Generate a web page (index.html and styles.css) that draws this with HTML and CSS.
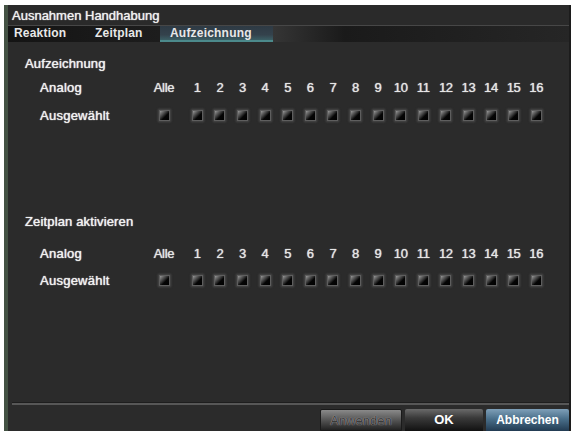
FILE: index.html
```html
<!DOCTYPE html>
<html lang="de">
<head>
<meta charset="utf-8">
<title>Ausnahmen Handhabung</title>
<link rel="stylesheet" href="styles.css">
</head>
<body>
<div class="dialog">
  <div class="titlebar">Ausnahmen Handhabung</div>
  <div class="tabs">
    <span class="tab tab-reaktion">Reaktion</span>
    <span class="tab tab-zeitplan">Zeitplan</span>
    <span class="tab tab-active">Aufzeichnung</span>
  </div>
  <div class="content">
    <div class="section section-first">
      <div class="heading">Aufzeichnung</div>
      <div class="grid grid-first">
        <div class="label">Analog</div>
        <div class="cell alle">Alle</div>
        <div class="cell">1</div><div class="cell">2</div><div class="cell">3</div><div class="cell">4</div>
        <div class="cell">5</div><div class="cell">6</div><div class="cell">7</div><div class="cell">8</div>
        <div class="cell">9</div><div class="cell">10</div><div class="cell">11</div><div class="cell">12</div>
        <div class="cell">13</div><div class="cell">14</div><div class="cell">15</div><div class="cell">16</div>
        <div class="label">Ausgewählt</div>
        <div class="cell alle"><span class="cb"></span></div>
        <div class="cell"><span class="cb"></span></div><div class="cell"><span class="cb"></span></div>
        <div class="cell"><span class="cb"></span></div><div class="cell"><span class="cb"></span></div>
        <div class="cell"><span class="cb"></span></div><div class="cell"><span class="cb"></span></div>
        <div class="cell"><span class="cb"></span></div><div class="cell"><span class="cb"></span></div>
        <div class="cell"><span class="cb"></span></div><div class="cell"><span class="cb"></span></div>
        <div class="cell"><span class="cb"></span></div><div class="cell"><span class="cb"></span></div>
        <div class="cell"><span class="cb"></span></div><div class="cell"><span class="cb"></span></div>
        <div class="cell"><span class="cb"></span></div><div class="cell"><span class="cb"></span></div>
      </div>
    </div>
    <div class="section section-second">
      <div class="heading">Zeitplan aktivieren</div>
      <div class="grid grid-second">
        <div class="label">Analog</div>
        <div class="cell alle">Alle</div>
        <div class="cell">1</div><div class="cell">2</div><div class="cell">3</div><div class="cell">4</div>
        <div class="cell">5</div><div class="cell">6</div><div class="cell">7</div><div class="cell">8</div>
        <div class="cell">9</div><div class="cell">10</div><div class="cell">11</div><div class="cell">12</div>
        <div class="cell">13</div><div class="cell">14</div><div class="cell">15</div><div class="cell">16</div>
        <div class="label">Ausgewählt</div>
        <div class="cell alle"><span class="cb"></span></div>
        <div class="cell"><span class="cb"></span></div><div class="cell"><span class="cb"></span></div>
        <div class="cell"><span class="cb"></span></div><div class="cell"><span class="cb"></span></div>
        <div class="cell"><span class="cb"></span></div><div class="cell"><span class="cb"></span></div>
        <div class="cell"><span class="cb"></span></div><div class="cell"><span class="cb"></span></div>
        <div class="cell"><span class="cb"></span></div><div class="cell"><span class="cb"></span></div>
        <div class="cell"><span class="cb"></span></div><div class="cell"><span class="cb"></span></div>
        <div class="cell"><span class="cb"></span></div><div class="cell"><span class="cb"></span></div>
        <div class="cell"><span class="cb"></span></div><div class="cell"><span class="cb"></span></div>
      </div>
    </div>
  </div>
  <div class="footer">
    <div class="buttons">
      <span class="btn btn-disabled">Anwenden</span>
      <span class="btn btn-ok">OK</span>
      <span class="btn btn-primary">Abbrechen</span>
    </div>
  </div>
</div>
</body>
</html>
```

FILE: styles.css
```css
html, body {
  margin: 0;
  padding: 0;
  background: #ffffff;
}

body {
  font-family: "Liberation Sans", Arial, sans-serif;
  font-size: 13px;
  color: #f2f2f2;
}

.dialog {
  margin: 5px 0 0 4px;
  width: 567px;
  height: 426px;
  background: #2b2b2b;
  border-left: 4px solid #445244;
  border-right: 2px solid #1c1c1c;
  box-sizing: border-box;
  display: flex;
  flex-direction: column;
  overflow: hidden;
}

.titlebar {
  height: 20px;
  line-height: 21px;
  padding-left: 4px;
  background: #2a2a2a;
  border-bottom: 1px solid #474747;
  text-shadow: 0 0 1px rgba(255, 255, 255, 0.7), 0 0 1px rgba(255, 255, 255, 0.4);
  flex: none;
}

.tabs {
  height: 16px;
  display: flex;
  align-items: stretch;
  padding-left: 2px;
  background: linear-gradient(to right, #141414 0%, #1e1e1e 30%, #3a3a3a 45%, #1a1a1a 60%, #262626 100%);
  flex: none;
}

.tab {
  line-height: 15px;
  font-weight: bold;
  font-size: 12px;
  color: #e8e8e8;
  letter-spacing: 0.2px;
}

.tab-reaktion {
  padding-left: 4px;
  width: 73px;
}

.tab-zeitplan {
  padding-left: 8px;
  width: 65px;
}

.tab-active {
  width: 103px;
  padding-left: 10px;
  background: linear-gradient(to bottom, #2e3a44 0%, #34424c 55%, #3d6a6e 100%);
  box-shadow: inset 0 -2px 0 #4c8a8c;
}

.content {
  flex: 1;
}

.section-first {
  padding-top: 14px;
}

.section-second {
  padding-top: 89px;
}

.heading {
  padding-left: 17px;
  line-height: 16px;
  letter-spacing: 0.15px;
  text-shadow: 0 0 1px rgba(255, 255, 255, 0.8), 0 0 1px rgba(255, 255, 255, 0.5);
}

.grid {
  display: grid;
  grid-template-columns: 109px 37px repeat(16, 22.6px);
  grid-auto-rows: 20px;
  padding-left: 32px;
  align-items: center;
}

.grid-first {
  margin-top: 5px;
  row-gap: 8px;
}

.grid-second {
  margin-top: 13px;
  row-gap: 7px;
}

.label {
  letter-spacing: 0.25px;
  text-shadow: 0 0 1px rgba(255, 255, 255, 0.8), 0 0 1px rgba(255, 255, 255, 0.5);
}

.cell {
  text-align: center;
  color: #e6e6e6;
  text-shadow: 0 0 1px rgba(255, 255, 255, 0.7), 0 0 1px rgba(255, 255, 255, 0.4);
  letter-spacing: -0.3px;
  display: flex;
  justify-content: center;
  align-items: center;
}

.alle {
  padding-right: 7px;
}

.cb {
  display: block;
  width: 9px;
  height: 9px;
  border: 1px solid #5e5e5e;
  background: linear-gradient(135deg, #9a9a9a 0%, #3a3a3a 40%, #050505 60%, #000 100%);
  box-shadow: 0 0 2px 1px #4a4a4a;
}

.footer {
  flex: none;
  margin-left: 4px;
  border-top: 2px solid #575757;
  box-shadow: 0 -1px 0 #1e1e1e;
  height: 28px;
  box-sizing: border-box;
}

.buttons {
  display: flex;
  justify-content: flex-end;
  padding-top: 4px;
  gap: 3px;
}

.btn {
  height: 22px;
  line-height: 22px;
  text-align: center;
  font-size: 13px;
  border-radius: 2px 2px 0 0;
}

.btn-disabled {
  width: 82px;
  color: #3a3a3a;
  background: linear-gradient(to bottom, #8a8a8a 0%, #5a5a5a 45%, #222 100%);
  text-shadow: 0 0 1px #cfcfcf;
  border: 1px solid #1a1a1a;
  box-sizing: border-box;
}

.btn-ok {
  width: 78px;
  color: #ffffff;
  font-weight: bold;
  background: linear-gradient(to bottom, #6a6a6a 0%, #3a3a3a 40%, #111 100%);
}

.btn-primary {
  width: 83px;
  color: #ffffff;
  font-weight: bold;
  font-size: 12px;
  background: linear-gradient(to bottom, #7e9fb8 0%, #4a6f8a 45%, #223b52 100%);
}
```
